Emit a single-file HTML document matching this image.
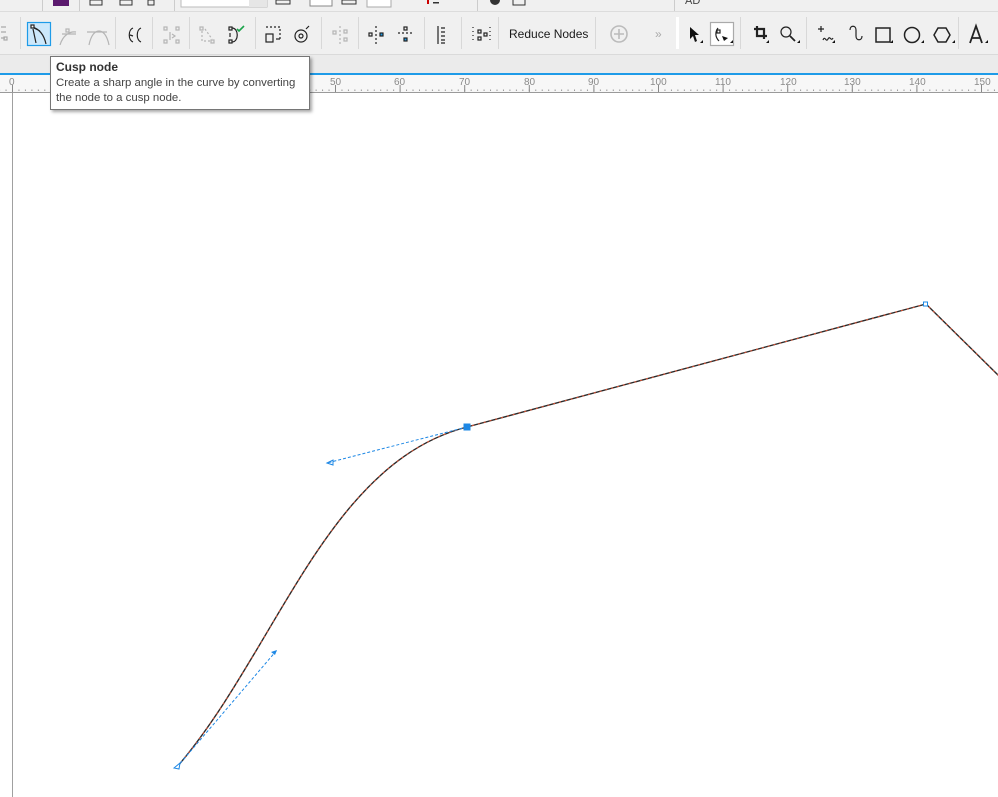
<!DOCTYPE html>
<html><head><meta charset="utf-8"><style>
html,body{margin:0;padding:0}
body{width:998px;height:797px;position:relative;overflow:hidden;background:#fff;font-family:"Liberation Sans",sans-serif}
.abs{position:absolute}
#top{left:0;top:0;width:998px;height:11px;background:#f0f0f0;border-bottom:1px solid #dcdcdc}
#tb{left:0;top:12px;width:998px;height:42px;background:#f0f0f0;border-bottom:1px solid #dadada}
#band{left:0;top:55px;width:998px;height:18px;background:#ebebeb}
#blue{left:0;top:73px;width:998px;height:2px;background:#1e9be8}
#ruler{left:0;top:75px;width:998px;height:17px;background:#f7f7f7;border-bottom:1px solid #9a9a9a}
.sep{position:absolute;top:17px;width:1px;height:32px;background:#d8d8d8}
#tip{left:50px;top:56px;width:258px;height:52px;background:#fff;border:1px solid #767676;box-shadow:2px 2px 3px rgba(0,0,0,.35);font-family:"Liberation Sans",sans-serif}
#tip b{position:absolute;left:5px;top:3px;font-size:12px;color:#333}
#tip div{position:absolute;left:5px;top:19px;font-size:11.4px;line-height:15px;color:#444;white-space:nowrap}
</style></head><body>
<div id="top" class="abs"></div>
<svg class="abs" style="left:0;top:0" width="998" height="11">
<rect x="53" y="0" width="16" height="6" fill="#5b1a6e"/>
<rect x="90" y="0" width="12" height="5" fill="none" stroke="#333"/>
<rect x="120" y="0" width="12" height="5" fill="none" stroke="#333"/>
<rect x="148" y="0" width="6" height="5" fill="none" stroke="#333"/>
<rect x="181" y="-1" width="86" height="8" fill="#fff" stroke="#bbb"/>
<rect x="249" y="-1" width="18" height="8" fill="#e6e6e6"/>
<rect x="276" y="0" width="14" height="4" fill="none" stroke="#333"/>
<rect x="310" y="-1" width="22" height="7" fill="#fff" stroke="#888"/>
<rect x="342" y="0" width="14" height="4" fill="none" stroke="#333"/>
<rect x="367" y="-1" width="24" height="8" fill="#fff" stroke="#aaa"/>
<rect x="427" y="0" width="2" height="4" fill="#c00"/>
<rect x="433" y="2" width="6" height="1.5" fill="#333"/>
<circle cx="495" cy="0" r="5" fill="#333"/>
<rect x="513" y="-1" width="12" height="6" fill="none" stroke="#333"/>
<text x="685" y="4" font-size="11" fill="#444">AD</text>
<line x1="42.5" y1="0" x2="42.5" y2="11" stroke="#ccc"/>
<line x1="79.5" y1="0" x2="79.5" y2="11" stroke="#ccc"/>
<line x1="174.5" y1="0" x2="174.5" y2="11" stroke="#ccc"/>
<line x1="477.5" y1="0" x2="477.5" y2="11" stroke="#ccc"/>
<line x1="674.5" y1="0" x2="674.5" y2="11" stroke="#ccc"/>
</svg>
<div id="tb" class="abs"></div>
<div class="sep" style="left:20px"></div><div class="sep" style="left:115px"></div><div class="sep" style="left:152px"></div>
<div class="sep" style="left:189px"></div><div class="sep" style="left:255px"></div><div class="sep" style="left:321px"></div>
<div class="sep" style="left:358px"></div><div class="sep" style="left:424px"></div><div class="sep" style="left:461px"></div>
<div class="sep" style="left:498px"></div><div class="sep" style="left:595px"></div><div class="sep" style="left:676px;background:#fff;width:3px"></div>
<div class="sep" style="left:740px"></div><div class="sep" style="left:806px"></div><div class="sep" style="left:958px"></div>
<svg class="abs" style="left:0;top:12px" width="998" height="42" fill="none" stroke="#222" stroke-width="1.2">
<g stroke="#aaa"><path d="M1 15h5M1 20h5M1 26h4"/><rect x="4" y="25" width="3" height="3"/></g>
<rect x="27.5" y="10.5" width="23" height="23" fill="#cce8fb" stroke="#1e9be8"/>
<path d="M32 15l8 4M32 15c8 2 12 8 14 17M33 17l3 14"/><rect x="31" y="13" width="3" height="3" fill="#fff"/>
<g stroke="#b5b5b5"><path d="M60 33c3-10 10-14 16-13M62 22h14"/><rect x="66" y="17" width="3" height="3"/>
<path d="M89 33c2-10 6-14 10-14c4 0 8 4 10 14M87 20h20"/></g>
<path d="M133 16c-5 2-5 12 0 14M141 16c-5 2-5 12 0 14M130 23l3 1"/>
<g stroke="#b5b5b5"><rect x="164" y="15" width="3" height="3"/><rect x="176" y="15" width="3" height="3"/><rect x="164" y="28" width="3" height="3"/><rect x="176" y="28" width="3" height="3"/><path d="M170 20v8M172 22l3 2l-3 2"/>
<rect x="200" y="15" width="3" height="3"/><rect x="211" y="28" width="3" height="3"/><path d="M202 19v10h9M205 17l7 10" stroke-dasharray="2 2"/></g>
<rect x="229" y="15" width="3" height="3"/><rect x="229" y="28" width="3" height="3"/><path d="M232 16c7 0 7 14 0 14M230 21v4"/><path d="M237 17l2 2l5-5" stroke="#1aa34a" stroke-width="1.6"/>
<rect x="266" y="22" width="7" height="8"/><path d="M266 15h14v14" stroke-dasharray="2 2"/><path d="M276 27h4"/>
<circle cx="301" cy="24" r="6"/><circle cx="301" cy="24" r="2"/><path d="M306 17l3-3"/>
<g stroke="#b5b5b5"><path d="M340 14v18" stroke-dasharray="2 2"/><rect x="333" y="19" width="3" height="3"/><rect x="344" y="18" width="3" height="3"/><rect x="344" y="26" width="3" height="3"/></g>
<path d="M376 14v18" stroke-dasharray="2 2"/><rect x="369" y="21" width="3" height="3"/><rect x="380" y="21" width="3" height="3" fill="#1e9be8"/>
<path d="M398 21h16" stroke-dasharray="2 2"/><rect x="404" y="15" width="3" height="3"/><rect x="404" y="26" width="3" height="3" fill="#1e9be8"/>
<path d="M438 14v18"/><path d="M441 16h4M441 20h4M441 24h4M441 28h4M441 31h4"/>
<rect x="478" y="18" width="3" height="3"/><rect x="478" y="25" width="3" height="3"/><rect x="484" y="21" width="3" height="3"/><path d="M473 15v16M490 15v16" stroke-dasharray="1 3"/>
<text x="509" y="26" font-size="12" fill="#1a1a1a" stroke="none" font-family="Liberation Sans">Reduce Nodes</text>
<g stroke="#bbb" stroke-width="1.6"><circle cx="619" cy="22" r="8"/><path d="M619 17v10M614 22h10"/></g>
<text x="655" y="26" font-size="12" fill="#aaa" stroke="none">»</text>
<path d="M690 15l9 8h-4l2 6-2 1-2-6-3 3z" fill="#111" stroke="none"/>
<rect x="710.5" y="10.5" width="23" height="23" fill="#fff" stroke="#aaa"/>
<path d="M718 16c-3 4-3 9 1 13"/><rect x="717" y="18" width="3" height="3" fill="#fff"/><path d="M722 24l6 2-4 3z" fill="#111" stroke="none"/>
<path d="M754 17h10v10M757 14v10h10" stroke-width="2.2"/>
<circle cx="786" cy="20" r="5"/><path d="M790 24l5 5" stroke-width="1.8"/>
<path d="M821 14v6M818 17h6M823 28c2-5 3 3 5-1c2-4 3 3 5-1"/>
<path d="M850 18c0-5 6-5 6 0v6c0 5 6 5 6 0"/>
<rect x="876" y="16" width="14" height="14" stroke-width="1.5"/>
<circle cx="912" cy="23" r="7.5" stroke-width="1.5"/>
<path d="M938 16h8l4 7-4 7h-8l-4-7z" stroke-width="1.5"/>
<path d="M970 31l6-17l6 17M972 26h8" stroke-width="1.8"/>
<g fill="#111" stroke="none"><path d="M700 31l3-3v3z"/><path d="M730 31l3-3v3z"/><path d="M766 31l3-3v3z"/><path d="M797 31l3-3v3z"/><path d="M832 31l3-3v3z"/><path d="M890 31l3-3v3z"/><path d="M921 31l3-3v3z"/><path d="M952 31l3-3v3z"/><path d="M985 31l3-3v3z"/></g>
</svg>
<div id="band" class="abs"></div>
<div id="blue" class="abs"></div>
<div id="ruler" class="abs"></div>
<svg class="abs" style="left:0;top:75px" width="998" height="18">
<defs><pattern id="tk" x="12" y="0" width="6.46" height="18" patternUnits="userSpaceOnUse"><rect x="0" y="14.5" width="1" height="1.5" fill="#999"/></pattern></defs>
<rect x="0" y="0" width="998" height="18" fill="url(#tk)"/>
<g stroke="#888"><path d="M12.5 10v7M77.1 10v7M141.7 10v7M206.3 10v7M270.9 10v7M335.5 10v7M400.1 10v7M464.7 10v7M529.3 10v7M593.9 10v7M658.5 10v7M723.1 10v7M787.7 10v7M852.3 10v7M916.9 10v7M981.5 10v7"/></g>
<g font-size="10" fill="#8a8a8a" font-family="Liberation Sans"><text x="9" y="10">0</text><text x="71" y="10">10</text><text x="135" y="10">20</text><text x="200" y="10">30</text><text x="265" y="10">40</text><text x="330" y="10">50</text><text x="394" y="10">60</text><text x="459" y="10">70</text><text x="524" y="10">80</text><text x="588" y="10">90</text><text x="650" y="10">100</text><text x="715" y="10">110</text><text x="780" y="10">120</text><text x="844" y="10">130</text><text x="909" y="10">140</text><text x="974" y="10">150</text></g>
</svg>
<svg class="abs" style="left:0;top:0" width="998" height="797">
<line x1="12.5" y1="93" x2="12.5" y2="797" stroke="#a0a0a0"/>
<path d="M177 767C277 650 327 463 467 427L926 304L1000 377" fill="none" stroke="#2a2a2a" stroke-width="1.4"/>
<path d="M177 767C277 650 327 463 467 427L926 304L1000 377" fill="none" stroke="#e05030" stroke-width="1" stroke-dasharray="2 4"/>
<g stroke="#1e88e5" stroke-width="1" stroke-dasharray="3 2" fill="none"><path d="M177 767L277 650"/><path d="M467 427L327 463"/></g>
<path d="M277 650l-6 2l4 3z" fill="#1e88e5"/>
<path d="M327 463l6-3v5z" fill="none" stroke="#1e88e5"/>
<path d="M174 768l6-5l-1 6z" fill="#fff" stroke="#1e88e5"/>
<rect x="463.5" y="423.5" width="7" height="7" fill="#1e88e5"/>
<rect x="923.5" y="302" width="4" height="4" fill="#fff" stroke="#1e88e5"/>
</svg>
<div id="tip" class="abs"><b>Cusp node</b><div>Create a sharp angle in the curve by converting<br>the node to a cusp node.</div></div>
</body></html>
